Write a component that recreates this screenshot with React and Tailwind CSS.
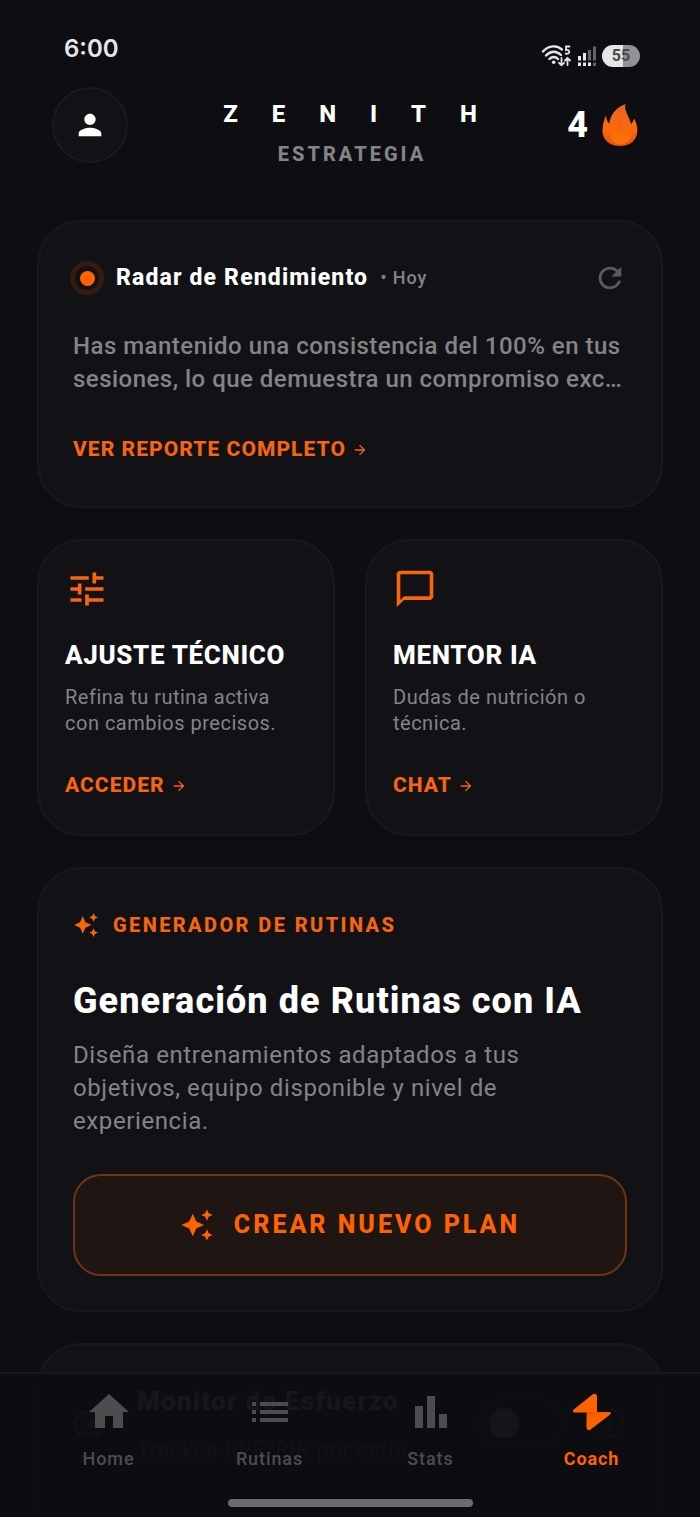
import {
  MdArrowForward,
  MdAutoAwesome,
  MdChatBubbleOutline,
  MdHome,
  MdInfoOutline,
  MdList,
  MdPerson,
  MdRefresh,
  MdTune,
} from 'react-icons/md';

function StatusIcons() {
  return (
    <div className="flex items-center gap-[5px] text-[#e6e6e8]">
      <svg className="w-8 h-6" viewBox="0 0 32 24" fill="none" stroke="currentColor" strokeWidth="2.4" strokeLinecap="round">
        <path d="M3 7.500C9 1 17 1 22 5.500" />
        <path d="M6 11.500C10.500 6.500 16.500 6.500 21 11" />
        <path d="M9.500 15C12 12.300 15.500 12.300 18 15" />
        <circle cx="13.700" cy="18.200" r="1.800" fill="currentColor" stroke="none" />
        <path d="M29.500 2.500H26v3.600c4-1 4.800 4.200-.3 3.600" strokeWidth="1.800" />
        <path d="M21.500 14v6.500M19 18.800l2.500 2.500 2.500-2.500M27.500 21v-6.500M25 16.500l2.500-2.500 2.500 2.500" strokeWidth="1.800" />
      </svg>
      <svg className="w-5 h-6" viewBox="0 0 20 24" fill="currentColor">
        <path d="M1 12h3v4.500H1zM6 9h3v7.500H6zM1 18.500h3V22H1zM6 18.500h3V22H6zM11 18.500h3V22h-3z" />
        <path d="M11 6h3v10.500h-3zM16 2.500h3v14h-3zM16 18.500h3V22h-3z" opacity="0.4" />
      </svg>
      <div className="w-[38px] h-[22px] rounded-full bg-linear-to-r from-[#e6e6e8] from-55% to-[#929294] to-55% flex items-center justify-center text-base leading-none font-bold text-[#4a4a4c]">
        55
      </div>
    </div>
  );
}

function FlameIcon() {
  return (
    <svg className="w-9 h-[42px]" viewBox="0 0 36 42">
      <defs>
        <linearGradient id="flame" x1="0" y1="0" x2="0" y2="1">
          <stop offset="0" stopColor="#e8622a" />
          <stop offset="0.600" stopColor="#fb6a0c" />
          <stop offset="1" stopColor="#ee4f10" />
        </linearGradient>
        <linearGradient id="flameCore" x1="0" y1="0" x2="0" y2="1">
          <stop offset="0" stopColor="#f4600f" />
          <stop offset="1" stopColor="#ff7408" />
        </linearGradient>
      </defs>
      <path fill="url(#flame)" d="M23.500 0c-2 7 4 12 5.500 20 1.500-1.500 2.800-3.800 3.300-5.500C34 18 35.500 22 35.300 27 35 36 28 42 18 42S.5 36 .5 27c0-6 1.200-9.500 3.400-15.500.5 3.500 1.300 6 3.300 8C8.500 10.500 14 3.500 23.500 0z" />
      <path fill="url(#flameCore)" d="M19 17c.5 4 5 7 5.500 11 1.200-1 1.800-2.500 2-4 2 2.500 2.800 5 2.200 8C28 37 24 40 18.500 40S9.500 37 9 32c-.3-3.500 1-6 2-8 .5 1.500 1 2.500 2 3.500.3-4.500 2.500-8 6-10.500z" />
    </svg>
  );
}

function StatsIcon({ className }) {
  return (
    <svg className={className} viewBox="0 0 24 24" fill="currentColor">
      <path d="M4 9h4v11H4zM10 4h4v16h-4zM16 13h4v7h-4z" />
    </svg>
  );
}

function CoachIcon({ className }) {
  return (
    <svg className={className} viewBox="0 0 48 48" fill="currentColor">
      <defs>
        <linearGradient id="fold" x1="0" y1="0" x2="0.500" y2="1">
          <stop offset="0" stopColor="#d95300" />
          <stop offset="0.350" stopColor="#ff6200" />
        </linearGradient>
      </defs>
      <path d="M24.500 6.500c2.200-1.600 4.500-.6 4.500 2V24.500H7c-2.200 0-2.800-1.800-1-3.300z" />
      <path fill="url(#fold)" d="M18.500 24h22.300c2.200 0 2.800 1.400 1 2.800L23 41.300c-2.200 1.700-4.500.8-4.500-2z" />
    </svg>
  );
}

function SpeedIcon({ className }) {
  return (
    <svg className={className} viewBox="0 0 32 26" fill="none" stroke="currentColor" strokeWidth="3">
      <path d="M6 24C-2 14 3 2 16 2s18 12 10 22z" strokeLinejoin="round" />
      <path d="M14 15l8-6-4 8z" fill="currentColor" />
    </svg>
  );
}

function ActionLink({ children }) {
  return (
    <a href="#" className="h-11 flex items-center gap-[6px] text-[21px] font-extrabold tracking-wider text-[#f9640f]">
      {children}
      <MdArrowForward className="h-4 w-4" />
    </a>
  );
}

function ToolCard({ icon: Icon, title, text, action }) {
  return (
    <section className="rounded-[44px] border-2 border-[#19191d] bg-[#121216] p-[26px]">
      <Icon className="h-11 w-11 text-[#f9640f]" />
      <h2 className="mt-7 text-[26px] leading-8 font-extrabold tracking-wide text-white">{title}</h2>
      <p className="mt-[13px] mb-7 text-xl leading-[26px] tracking-wide text-[#848486]">{text}</p>
      <ActionLink>{action}</ActionLink>
    </section>
  );
}

const tabs = [
  { label: 'Home', icon: MdHome },
  { label: 'Rutinas', icon: MdList },
  { label: 'Stats', icon: StatsIcon },
  { label: 'Coach', icon: CoachIcon, active: true },
];

function TabBar() {
  return (
    <nav className="absolute inset-x-0 bottom-0 border-t-2 border-[#19191d] bg-[#0d0d12]/96 pt-[14px] pb-[10px]">
      <div className="grid grid-cols-4 px-7">
        {tabs.map(({ label, icon: Icon, active }) => (
          <a
            key={label}
            href="#"
            className={
              active
                ? 'flex flex-col items-center gap-[11px] text-lg leading-6 font-bold tracking-wider text-[#ff6200]'
                : 'flex flex-col items-center gap-[11px] text-lg leading-6 font-medium tracking-wider text-[#4d4d50]'
            }
          >
            <Icon className="h-12 w-12" />
            {label}
          </a>
        ))}
      </div>
      <div className="mx-auto mt-7 h-2 w-[245px] rounded-full bg-[#6b6b6d]" />
    </nav>
  );
}

export default function App() {
  return (
    <div className="relative h-screen overflow-hidden flex flex-col bg-[#0d0d12] font-['Roboto',sans-serif] text-white">
      <div className="flex items-start justify-between pl-16 pr-[60px] pt-[33px] h-[87px]">
        <span className="text-2xl leading-8 font-semibold font-['Inter',sans-serif] text-[#e6e6e8]">6:00</span>
        <div className="pt-[11px]">
          <StatusIcons />
        </div>
      </div>

      <header className="grid grid-cols-[1fr_auto_1fr] items-start px-[52px]">
        <button aria-label="Perfil" className="h-[76px] w-[76px] rounded-full border-2 border-[#1b1b1f] bg-[#121216] flex items-center justify-center">
          <MdPerson className="h-[34px] w-[34px]" />
        </button>
        <div className="pt-[11px] text-center">
          <h1 className="pl-[34px] text-2xl leading-8 font-extrabold tracking-[34px]">ZENITH</h1>
          <p className="mt-2 pl-1 text-xl leading-8 font-extrabold tracking-[3px] text-[#848486]">ESTRATEGIA</p>
        </div>
        <div className="h-[76px] flex items-center justify-end gap-[14px] pr-[10px]">
          <span className="text-4xl font-extrabold">4</span>
          <FlameIcon />
        </div>
      </header>

      <main className="mt-[50px] flex-1 min-h-0 overflow-y-auto [scrollbar-width:none] px-[37px] flex flex-col gap-[31px]">
        <section className="shrink-0 rounded-[44px] border-2 border-[#19191d] bg-[#121216] p-[34px]">
          <div className="h-11 flex items-center">
            <span className="-ml-[3px] h-[34px] w-[34px] rounded-full border-[5px] border-[#331b10] flex items-center justify-center">
              <span className="h-[15px] w-[15px] rounded-full bg-[#ff6200]" />
            </span>
            <h2 className="ml-3 text-[23px] font-extrabold tracking-wider">Radar de Rendimiento</h2>
            <span className="ml-3 text-lg font-medium tracking-wider text-[#848486]">• Hoy</span>
            <button aria-label="Actualizar" className="ml-auto text-[#5c5c5f]">
              <MdRefresh className="h-[34px] w-[34px]" />
            </button>
          </div>
          <p className="mt-[30px] mb-8 text-2xl leading-[33px] font-medium tracking-[0.02em] text-[#848486]">
            Has mantenido una consistencia del 100% en tus sesiones, lo que demuestra un compromiso exc…
          </p>
          <ActionLink>VER REPORTE COMPLETO</ActionLink>
        </section>

        <div className="shrink-0 grid grid-cols-2 gap-[30px]">
          <ToolCard icon={MdTune} title="AJUSTE TÉCNICO" text="Refina tu rutina activa con cambios precisos." action="ACCEDER" />
          <ToolCard icon={MdChatBubbleOutline} title="MENTOR IA" text="Dudas de nutrición o técnica." action="CHAT" />
        </div>

        <section className="shrink-0 rounded-[44px] border-2 border-[#19191d] bg-[#121216] p-[34px]">
          <div className="h-11 flex items-center gap-[14px] text-[#f9640f]">
            <MdAutoAwesome className="h-[26px] w-[26px]" />
            <span className="text-xl font-extrabold tracking-[0.12em]">GENERADOR DE RUTINAS</span>
          </div>
          <h2 className="mt-8 text-4xl leading-[44px] font-extrabold tracking-[0.03em]">Generación de Rutinas con IA</h2>
          <p className="mt-4 text-2xl leading-[33px] tracking-wide text-[#848486]">
            Diseña entrenamientos adaptados a tus objetivos, equipo disponible y nivel de experiencia.
          </p>
          <button className="mt-9 h-[102px] w-full rounded-[28px] border-2 border-[#6f3414] bg-[#1f1613] flex items-center justify-center gap-5 text-[25px] font-extrabold tracking-[3px] text-[#ff6200]">
            <MdAutoAwesome className="h-[34px] w-[34px]" />
            CREAR NUEVO PLAN
          </button>
        </section>

        <section className="shrink-0 rounded-[44px] border-2 border-[#19191d] bg-[#121216] px-[34px] pt-[34px] pb-28">
          <div className="flex items-center w-full">
            <SpeedIcon className="mr-8 h-[26px] w-8 text-[#848486]" />
            <div>
              <h2 className="text-[26px] leading-[44px] font-extrabold tracking-wider">Monitor de Esfuerzo</h2>
              <p className="mt-[11px] text-[22px] leading-8 tracking-wide text-[#848486]">Trackea RPE/RIR por serie</p>
            </div>
            <input
              type="checkbox"
              role="switch"
              aria-label="Monitor de Esfuerzo"
              className="ml-auto mr-7 appearance-none h-[50px] w-[84px] rounded-full border-2 border-[#1d1d21] bg-[#141418] before:block before:m-2 before:h-[30px] before:w-[30px] before:rounded-full before:bg-[#c8c8cb]"
            />
            <button aria-label="Información" className="text-[#5c5c5f]">
              <MdInfoOutline className="h-9 w-9" />
            </button>
          </div>
        </section>
      </main>

      <TabBar />
    </div>
  );
}
